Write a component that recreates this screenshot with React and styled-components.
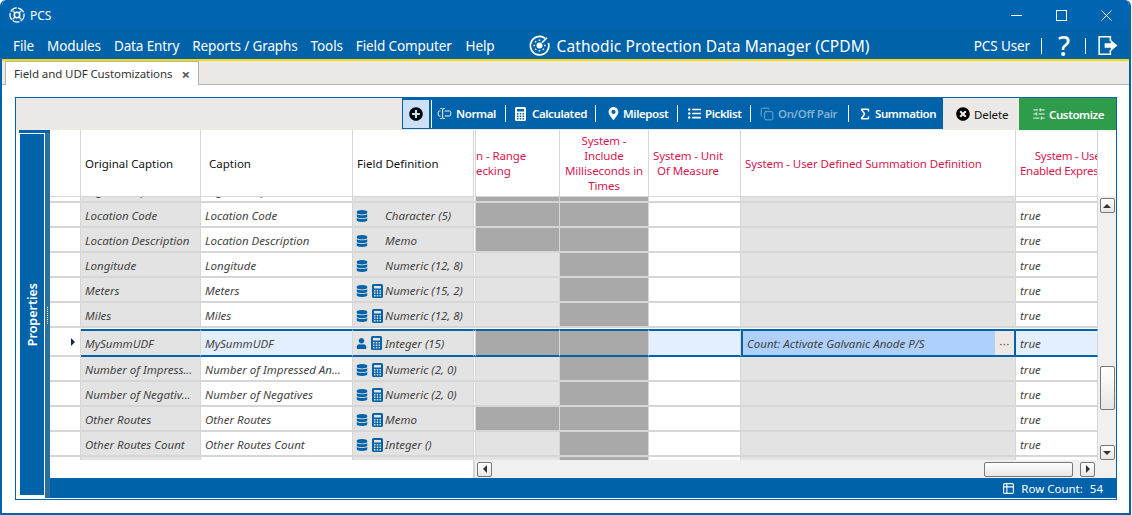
import React from 'react'
import styled, { createGlobalStyle } from 'styled-components'
import { FaDatabase, FaUser, FaPlusCircle, FaTimesCircle, FaMapMarkerAlt, FaListUl } from 'react-icons/fa'
import { Copy, Sigma, SlidersHorizontal, TextCursorInput, Table2 } from 'lucide-react'

const BLUE = '#0063a9'
const LINE = '#d6d6d6'
const COLUMNS = '31px 120px 152px 121px 2px 84px 89px 92px 275px 82px'

const GlobalStyle = createGlobalStyle`
  body {
    margin: 0;
    background: #fff;
    font-family: "Noto Sans", "Open Sans", sans-serif;
  }
`
const Window = styled.div`
  width: 1131px;
  height: 515px;
  box-sizing: border-box;
  border: 2px solid ${BLUE};
  border-top: 0;
  border-radius: 6px 6px 0 0;
  display: flex;
  flex-direction: column;
  overflow: hidden;
  background: #fff;
`
const TitleBar = styled.div`
  height: 30px;
  flex: none;
  display: flex;
  align-items: center;
  padding-left: 7px;
  background: #0064b0;
  color: #fff;
  font-size: 12px;
`
const AppName = styled.span`
  margin-left: 5px;
`
const WindowControls = styled.div`
  display: flex;
  margin-left: auto;
`
const WindowButton = styled.div`
  width: 45px;
  height: 30px;
  display: flex;
  align-items: center;
  justify-content: center;
`
const MenuBar = styled.div`
  height: 27px;
  flex: none;
  display: flex;
  align-items: center;
  padding: 3px 0 0 11px;
  box-sizing: content-box;
  margin-top: -1px;
  background: ${BLUE};
  border-bottom: 2px solid #f5d90a;
  color: #fff;
  font-size: 13.5px;
  letter-spacing: -0.12px;
`
const MenuItem = styled.span`
  margin-right: ${(p) => p.$gap}px;
  white-space: nowrap;
`
const AppTitle = styled.div`
  display: flex;
  align-items: center;
  gap: 7px;
  margin-left: 34px;
  font-size: 15.5px;
  letter-spacing: 0.1px;
  white-space: nowrap;
`
const UserArea = styled.div`
  display: flex;
  align-items: center;
  margin-left: auto;
  margin-right: 11px;
`
const MenuDivider = styled.span`
  width: 1px;
  height: 16px;
  background: #fff;
  margin: 0 ${(p) => p.$right}px 0 ${(p) => p.$left}px;
`
const HelpMark = styled.span`
  width: 14px;
  display: flex;
  justify-content: center;
  font-size: 27px;
  font-weight: 500;
  line-height: 1;
`
const TabStrip = styled.div`
  height: 24px;
  flex: none;
  display: flex;
  background: #ece8e6;
  border-bottom: 1px solid #b4b4b4;
  padding-left: 3px;
  box-sizing: border-box;
`
const Tab = styled.div`
  width: 194px;
  height: 24px;
  box-sizing: border-box;
  display: flex;
  align-items: center;
  justify-content: space-between;
  padding: 0 8px;
  background: #fff;
  border: 1px solid #b4b4b4;
  border-bottom: 0;
  font-size: 11.5px;
  letter-spacing: -0.1px;
  color: #333;
  white-space: nowrap;
`
const TabClose = styled.span`
  font-size: 15px;
  font-weight: 700;
  color: #555;
`
const Content = styled.div`
  flex: 1;
  min-height: 0;
  padding: 12px 12px 13px 13px;
`
const Panel = styled.div`
  height: 100%;
  box-sizing: border-box;
  border: 1px solid ${BLUE};
  display: flex;
  flex-direction: column;
`
const Toolbar = styled.div`
  height: 32px;
  flex: none;
  display: flex;
  justify-content: flex-end;
  align-items: stretch;
  background: #ece8e6;
  font-size: 11.5px;
  font-weight: 600;
  letter-spacing: -0.4px;
`
const ToolGroup = styled.div`
  display: flex;
  align-items: center;
  background: ${BLUE};
  color: #fff;
  padding: 1px 0 1px 1px;
  margin-bottom: 1px;
`
const AddButton = styled.div`
  width: 26px;
  height: 28px;
  display: flex;
  align-items: center;
  justify-content: center;
  background: #c9e0f7;
  color: #000;
  margin-right: 2px;
`
const ToolSep = styled.span`
  width: 1px;
  flex: none;
  height: ${(p) => (p.$tall ? 28 : 17)}px;
  background: #fff;
`
const ToolButton = styled.div`
  width: ${(p) => p.$width}px;
  box-sizing: border-box;
  flex: none;
  display: flex;
  align-items: center;
  gap: ${(p) => p.$gap}px;
  padding-left: ${(p) => p.$left}px;
  white-space: nowrap;
  color: ${(p) => (p.$disabled ? '#7fb0d4' : 'inherit')};
`
const DeleteButton = styled.div`
  display: flex;
  align-items: center;
  gap: 4px;
  width: 76px;
  box-sizing: border-box;
  padding-left: 13px;
  color: #111;
  font-weight: 400;
  letter-spacing: -0.1px;
`
const CustomizeButton = styled.div`
  width: 97px;
  box-sizing: border-box;
  display: flex;
  align-items: center;
  gap: 3px;
  padding-left: 13px;
  background: #2f9c4b;
  color: #fff;
`
const Main = styled.div`
  flex: 1;
  min-height: 0;
  display: flex;
  padding-left: 3px;
`
const SideColumn = styled.div`
  width: 31px;
  flex: none;
  display: flex;
  flex-direction: column;
  margin-bottom: 1px;
`
const SideTopBar = styled.div`
  height: 3px;
  flex: none;
  background: ${BLUE};
`
const SideBody = styled.div`
  flex: 1;
  min-height: 0;
  display: flex;
`
const Sidebar = styled.div`
  width: 25px;
  box-sizing: border-box;
  flex: none;
  display: flex;
  align-items: center;
  justify-content: center;
  margin: 1px 0 3px 1px;
  background: ${BLUE};
  color: #fff;
  border-right: 1px solid #fff;
  font-size: 12.5px;
  font-weight: 600;
`
const SidebarLabel = styled.span`
  writing-mode: vertical-rl;
  transform: rotate(180deg);
`
const Grip = styled.div`
  width: 5px;
  flex: none;
  display: flex;
  align-items: center;
  justify-content: center;
  background: #2a6f9f;
  &::before {
    content: '';
    width: 1px;
    height: 18px;
    background: repeating-linear-gradient(to bottom, #fff 0 1px, transparent 1px 2px);
  }
`
const GridArea = styled.div`
  flex: 1;
  min-width: 0;
  display: flex;
  flex-direction: column;
`
const GridRowWrap = styled.div`
  flex: 1;
  min-height: 0;
  display: flex;
`
const GridCore = styled.div`
  width: 1048px;
  flex: none;
  display: flex;
  flex-direction: column;
`
const HeaderRow = styled.div`
  height: 67px;
  flex: none;
  display: grid;
  grid-template-columns: ${COLUMNS};
  border-bottom: 1px solid ${LINE};
  box-sizing: border-box;
`
const HeaderCell = styled.div`
  display: flex;
  align-items: center;
  justify-content: ${(p) => (p.$left ? 'flex-start' : 'center')};
  text-align: ${(p) => (p.$left ? 'left' : 'center')};
  padding: 0 ${(p) => p.$padRight ?? 0}px 0 ${(p) => p.$pad ?? 0}px;
  box-sizing: border-box;
  border-right: 1px solid ${LINE};
  color: ${(p) => (p.$system ? '#d9164f' : '#111')};
  font-size: 11.5px;
  letter-spacing: ${(p) => (p.$system ? '-0.1px' : '0')};
  line-height: 15px;
  overflow: hidden;
  white-space: nowrap;
`
const HeaderLines = styled.span`
  display: block;
  flex: none;
  text-align: ${(p) => p.$align ?? 'center'};
  letter-spacing: ${(p) => (p.$tight ? '-0.3px' : 'inherit')};
`
const Body = styled.div`
  height: 264px;
  overflow: hidden;
`
const Row = styled.div`
  display: grid;
  grid-template-columns: ${COLUMNS};
  grid-template-rows: ${(p) => (p.$selected ? 28 : 25)}px;
  height: ${(p) => p.$height ?? (p.$selected ? 28 : 25)}px;
  margin-top: ${(p) => (p.$selected ? 1 : 0)}px;
  align-content: ${(p) => (p.$clipTop ? 'end' : 'start')};
  overflow: hidden;
`
const cellColors = { gray: '#e3e3e3', dark: '#a9a9a9', white: '#fff', sel: '#e3effd', active: '#aed0fb' }
const Cell = styled.div`
  box-sizing: border-box;
  display: flex;
  align-items: center;
  padding-left: ${(p) => p.$pad ?? 0}px;
  padding-top: ${(p) => (p.$selected ? 0 : 2)}px;
  background: ${(p) => cellColors[p.$tone]};
  border-right: 1px solid ${LINE};
  border-bottom: 2px solid ${(p) => (p.$selected ? BLUE : LINE)};
  border-top: ${(p) => (p.$selected ? `2px solid ${BLUE}` : '0')};
  color: #444;
  font-size: 11.5px;
  font-style: italic;
  white-space: nowrap;
  overflow: hidden;
`
const Indicator = styled(Cell)`
  justify-content: flex-end;
  padding-right: 5px;
  padding-top: 0;
`
const Arrow = styled.span`
  width: 0;
  height: 0;
  border-left: 4px solid #0d2a55;
  border-top: 4px solid transparent;
  border-bottom: 4px solid transparent;
`
const FieldIcons = styled.span`
  width: 29px;
  flex: none;
  display: flex;
  align-items: center;
  gap: 4px;
  color: ${BLUE};
`
const ActiveCell = styled(Cell)`
  border-left: 2px solid ${BLUE};
  border-right: 2px solid ${BLUE};
  justify-content: space-between;
  padding-left: 4px;
`
const EllipsisButton = styled.span`
  width: 19px;
  height: 100%;
  flex: none;
  display: flex;
  align-items: center;
  justify-content: center;
  background: #ece8e6;
  font-style: normal;
  color: #555;
  letter-spacing: 0.5px;
`
const ScrollColumn = styled.div`
  width: 18px;
  flex: none;
  display: flex;
  flex-direction: column;
`
const ScrollHeaderGap = styled.div`
  height: 66px;
  flex: none;
`
const ScrollTrack = styled.div`
  height: 265px;
  flex: none;
  background: #f0f0f0;
  display: flex;
  flex-direction: column;
  align-items: center;
  padding: 2px 0;
  box-sizing: border-box;
`
const ScrollThumb = styled.div`
  width: ${(p) => p.$w}px;
  height: ${(p) => p.$h}px;
  box-sizing: border-box;
  flex: none;
  display: flex;
  align-items: center;
  justify-content: center;
  margin-top: ${(p) => p.$top ?? 0}px;
  margin-left: ${(p) => p.$left ?? 0}px;
  border: 1px solid #777;
  border-radius: 2px;
  background: linear-gradient(to bottom, #fff, #e6e6e6);
`
const ArrowGlyph = styled.span`
  width: 0;
  height: 0;
  border-style: solid;
  border-color: transparent;
  ${(p) => p.$dir === 'up' && 'border-width: 0 4px 4px; border-bottom-color: #333;'}
  ${(p) => p.$dir === 'down' && 'border-width: 4px 4px 0; border-top-color: #333;'}
  ${(p) => p.$dir === 'left' && 'border-width: 4px 4px 4px 0; border-right-color: #333;'}
  ${(p) => p.$dir === 'right' && 'border-width: 4px 0 4px 4px; border-left-color: #333;'}
`
const HScrollRow = styled.div`
  height: 18px;
  flex: none;
  display: flex;
`
const HScrollBlank = styled.div`
  width: 423px;
  flex: none;
  border-right: 2px solid ${LINE};
`
const HScrollTrack = styled.div`
  flex: 1;
  display: flex;
  align-items: center;
  background: #f0f0f0;
`
const Footer = styled.div`
  height: 20px;
  flex: none;
  display: flex;
  align-items: center;
  justify-content: flex-end;
  gap: 6px;
  padding-right: 13px;
  margin-bottom: 1px;
  background: ${BLUE};
  color: #fff;
  font-size: 11.5px;
`
const CountValue = styled.span`
  margin-left: 1px;
`

const rows = [
  { orig: 'Location Code', cap: 'Location Code', def: 'Character (5)', db: true, a: 'dark' },
  { orig: 'Location Description', cap: 'Location Description', def: 'Memo', db: true, a: 'dark' },
  { orig: 'Longitude', cap: 'Longitude', def: 'Numeric (12, 8)', db: true, a: 'gray' },
  { orig: 'Meters', cap: 'Meters', def: 'Numeric (15, 2)', db: true, calc: true, a: 'gray' },
  { orig: 'Miles', cap: 'Miles', def: 'Numeric (12, 8)', db: true, calc: true, a: 'gray' },
  { orig: 'MySummUDF', cap: 'MySummUDF', def: 'Integer (15)', user: true, calc: true, a: 'dark', selected: true },
  { orig: 'Number of Impress...', cap: 'Number of Impressed An...', def: 'Numeric (2, 0)', db: true, calc: true, a: 'gray' },
  { orig: 'Number of Negativ...', cap: 'Number of Negatives', def: 'Numeric (2, 0)', db: true, calc: true, a: 'gray' },
  { orig: 'Other Routes', cap: 'Other Routes', def: 'Memo', db: true, calc: true, a: 'dark' },
  { orig: 'Other Routes Count', cap: 'Other Routes Count', def: 'Integer ()', db: true, calc: true, a: 'gray' },
]

const LogoIcon = ({ size }) => (
  <svg width={size} height={size} viewBox="0 0 20 20" fill="none" stroke="#fff">
    <circle cx="10" cy="10" r="8.8" strokeWidth="1.6" strokeDasharray="9 1.6" />
    <circle cx="10" cy="10" r="3.4" strokeWidth="2" />
    <path d="M4.5 4.5l3 3M15.5 4.5l-3 3M4.5 15.5l3-3M15.5 15.5l-3-3" strokeWidth="1.6" />
  </svg>
)

const AppLogo = () => (
  <svg width="21" height="21" viewBox="0 0 21 21" fill="none" stroke="#fff">
    <path d="M16.2 3.4A9.2 9.2 0 1 0 19.4 8" strokeWidth="1.7" />
    <circle cx="10.5" cy="10.5" r="3" fill="#fff" stroke="none" />
    <path d="M10.5 4.5v1.6M4.5 10.5h1.6M15 10.5h1.6M10.5 15v1.6M6.2 6.2l1 1M6.2 14.8l1-1M14.8 14.8l-1-1M18 2.8l-5 5" strokeWidth="1.6" />
  </svg>
)

const ExitIcon = () => (
  <svg width="20" height="21" viewBox="0 0 21 21" fill="none">
    <path d="M13 6V1.2H1.2v18.6H13V15" stroke="#fff" strokeWidth="1.6" />
    <path d="M7 8.2h6.5V4.8l7 5.7-7 5.7v-3.4H7z" fill="#fff" />
  </svg>
)

// body with a display slot and a 3x3 key grid punched out
const CalcIcon = () => (
  <svg width="11" height="14" viewBox="0 0 11 14">
    <path
      fill="currentColor"
      fillRule="evenodd"
      d="M1.5 0h8A1.5 1.5 0 0 1 11 1.500v11A1.500 1.500 0 0 1 9.500 14h-8A1.500 1.500 0 0 1 0 12.500v-11A1.500 1.500 0 0 1 1.500 0z
         M2 2v2.500h7V2z
         M2 6v1.500h1.500V6z M4.750 6v1.500h1.500V6z M7.500 6v1.500H9V6z
         M2 8.500V10h1.500V8.500z M4.750 8.500V10h1.500V8.500z M7.500 8.500V10H9V8.500z
         M2 11v1.500h1.500V11z M4.750 11v1.500h1.500V11z M7.500 11v1.500H9V11z"
    />
  </svg>
)

const GridRow = ({ row, height, clipTop }) => {
  const sel = row.selected
  const tone = (t) => (sel && t === 'white' ? 'sel' : t)
  return (
    <Row $selected={sel} $height={height} $clipTop={clipTop}>
      <Indicator $tone="white">{sel && <Arrow />}</Indicator>
      <Cell $tone="gray" $pad={4} $selected={sel}>{row.orig}</Cell>
      <Cell $tone={tone('white')} $pad={4} $selected={sel}>{row.cap}</Cell>
      <Cell $tone="gray" $pad={3} $selected={sel}>
        <FieldIcons>
          {row.db && <FaDatabase size={12} />}
          {row.user && <FaUser size={11} />}
          {row.calc && <CalcIcon />}
        </FieldIcons>
        {row.def}
      </Cell>
      <Cell $tone="white" $selected={sel} />
      <Cell $tone={row.a} $selected={sel} />
      <Cell $tone="dark" $selected={sel} />
      <Cell $tone={tone('white')} $selected={sel} />
      {sel ? (
        <ActiveCell $tone="active" $selected>
          Count: Activate Galvanic Anode P/S
          <EllipsisButton>···</EllipsisButton>
        </ActiveCell>
      ) : (
        <Cell $tone="gray" />
      )}
      <Cell $tone={tone('white')} $pad={4} $selected={sel}>true</Cell>
    </Row>
  )
}

const App = () => (
  <>
    <GlobalStyle />
    <Window>
      <TitleBar>
        <LogoIcon size={16} />
        <AppName>PCS</AppName>
        <WindowControls>
          <WindowButton>
            <svg width="11" height="11" viewBox="0 0 11 11" stroke="#fff"><path d="M0 5.5h11" /></svg>
          </WindowButton>
          <WindowButton>
            <svg width="11" height="11" viewBox="0 0 11 11" fill="none" stroke="#fff"><rect x="0.5" y="0.5" width="10" height="10" /></svg>
          </WindowButton>
          <WindowButton>
            <svg width="11" height="11" viewBox="0 0 11 11" stroke="#fff"><path d="M0.5 0.5l10 10M10.5 0.5l-10 10" /></svg>
          </WindowButton>
        </WindowControls>
      </TitleBar>
      <MenuBar>
        <MenuItem $gap={13}>File</MenuItem>
        <MenuItem $gap={13}>Modules</MenuItem>
        <MenuItem $gap={13}>Data Entry</MenuItem>
        <MenuItem $gap={13}>Reports / Graphs</MenuItem>
        <MenuItem $gap={13}>Tools</MenuItem>
        <MenuItem $gap={14}>Field Computer</MenuItem>
        <MenuItem $gap={0}>Help</MenuItem>
        <AppTitle>
          <AppLogo />
          Cathodic Protection Data Manager (CPDM)
        </AppTitle>
        <UserArea>
          PCS User
          <MenuDivider $left={11} $right={15} />
          <HelpMark>?</HelpMark>
          <MenuDivider $left={14} $right={12} />
          <ExitIcon />
        </UserArea>
      </MenuBar>
      <TabStrip>
        <Tab>
          Field and UDF Customizations
          <TabClose>×</TabClose>
        </Tab>
      </TabStrip>
      <Content>
        <Panel>
          <Toolbar>
            <ToolGroup>
              <AddButton><FaPlusCircle size={14} /></AddButton>
              <ToolSep $tall />
              <ToolButton $width={73} $left={5} $gap={4}><TextCursorInput size={15} strokeWidth={1.5} />Normal</ToolButton>
              <ToolSep />
              <ToolButton $width={89} $left={9} $gap={6}><CalcIcon />Calculated</ToolButton>
              <ToolSep />
              <ToolButton $width={81} $left={11} $gap={3}><FaMapMarkerAlt size={13} />Milepost</ToolButton>
              <ToolSep />
              <ToolButton $width={72} $left={10} $gap={4}><FaListUl size={13} />Picklist</ToolButton>
              <ToolSep />
              <ToolButton $width={97} $left={9} $gap={4} $disabled><Copy size={14} strokeWidth={1.5} />On/Off Pair</ToolButton>
              <ToolSep />
              <ToolButton $width={94} $left={9} $gap={3}><Sigma size={14} strokeWidth={2.5} />Summation</ToolButton>
            </ToolGroup>
            <DeleteButton><FaTimesCircle size={14} color="#000" />Delete</DeleteButton>
            <CustomizeButton><SlidersHorizontal size={14} strokeWidth={1.6} />Customize</CustomizeButton>
          </Toolbar>
          <Main>
            <SideColumn>
              <SideTopBar />
              <SideBody>
                <Sidebar><SidebarLabel>Properties</SidebarLabel></Sidebar>
                <Grip />
              </SideBody>
            </SideColumn>
            <GridArea>
              <GridRowWrap>
                <GridCore>
                  <HeaderRow>
                    <HeaderCell />
                    <HeaderCell $left $pad={4}>Original Caption</HeaderCell>
                    <HeaderCell $left $pad={8}>Caption</HeaderCell>
                    <HeaderCell $left $pad={4}>Field Definition</HeaderCell>
                    <HeaderCell />
                    <HeaderCell $left $system>
                      <HeaderLines $align="left">n - Range<br />ecking</HeaderLines>
                    </HeaderCell>
                    <HeaderCell $system>
                      <HeaderLines>System -<br />Include<br />Milliseconds in<br />Times</HeaderLines>
                    </HeaderCell>
                    <HeaderCell $system $padRight={13}>
                      <HeaderLines>System - Unit<br />Of Measure</HeaderLines>
                    </HeaderCell>
                    <HeaderCell $left $system $pad={4}>System - User Defined Summation Definition</HeaderCell>
                    <HeaderCell $left $system $pad={4}>
                      <HeaderLines $tight>System - User<br />Enabled Expression</HeaderLines>
                    </HeaderCell>
                  </HeaderRow>
                  <Body>
                    <GridRow
                      row={{ orig: 'Legal Group', cap: 'Legal Group', def: 'Character (5)', db: false, a: 'dark' }}
                      height={6}
                      clipTop
                    />
                    {rows.map((row) => <GridRow key={row.orig} row={row} />)}
                    <GridRow row={{ orig: '', cap: '', def: '', a: 'gray' }} height={4} />
                  </Body>
                </GridCore>
                <ScrollColumn>
                  <ScrollHeaderGap />
                  <ScrollTrack>
                    <ScrollThumb $w={15} $h={15}><ArrowGlyph $dir="up" /></ScrollThumb>
                    <ScrollThumb $w={15} $h={44} $top={153} />
                    <ScrollThumb $w={15} $h={15} $top={35}><ArrowGlyph $dir="down" /></ScrollThumb>
                  </ScrollTrack>
                </ScrollColumn>
              </GridRowWrap>
              <HScrollRow>
                <HScrollBlank />
                <HScrollTrack>
                  <ScrollThumb $w={15} $h={15} $left={2}><ArrowGlyph $dir="left" /></ScrollThumb>
                  <ScrollThumb $w={89} $h={15} $left={492} />
                  <ScrollThumb $w={15} $h={15} $left={7}><ArrowGlyph $dir="right" /></ScrollThumb>
                </HScrollTrack>
              </HScrollRow>
              <Footer>
                <Table2 size={13} />
                Row Count:
                <CountValue>54</CountValue>
              </Footer>
            </GridArea>
          </Main>
        </Panel>
      </Content>
    </Window>
  </>
)

export default App
